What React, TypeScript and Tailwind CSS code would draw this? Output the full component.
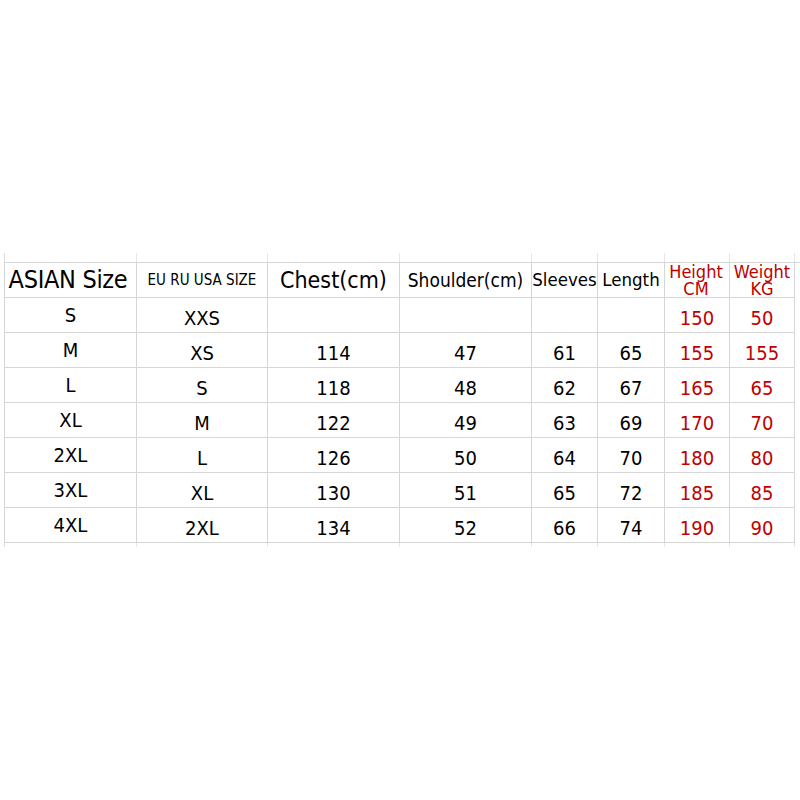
import React from "react";

const cols = "grid-cols-[132px_131px_132px_132px_66px_67px_65px_65px]";

const rows: string[][] = [
  ["S", "XXS", "", "", "", "", "150", "50"],
  ["M", "XS", "114", "47", "61", "65", "155", "155"],
  ["L", "S", "118", "48", "62", "67", "165", "65"],
  ["XL", "M", "122", "49", "63", "69", "170", "70"],
  ["2XL", "L", "126", "50", "64", "70", "180", "80"],
  ["3XL", "XL", "130", "51", "65", "72", "185", "85"],
  ["4XL", "2XL", "134", "52", "66", "74", "190", "90"],
];

export default function App() {
  const font = { fontFamily: '"DejaVu Sans Condensed", "DejaVu Sans", Tahoma, sans-serif' };
  return (
    <div className="w-[800px] h-[800px] bg-white relative overflow-hidden" style={font}>
      <div className="pt-[253px] pl-[4px]">
        {/* stubs above grid */}
        <div className={`grid ${cols} h-[9px] border-l border-[#dcdcdc]`}>
          {Array.from({ length: 8 }).map((_, i) => (
            <div key={i} className="border-r border-[#e6e6e6]" />
          ))}
        </div>
        <div className={`grid ${cols} border-l border-t border-[#d6d6d6]`}>
          {/* header */}
          <div className="h-[35px] border-r border-b border-[#d6d6d6] flex items-center justify-center pr-[5px] text-[25px] text-black tracking-[-0.3px] whitespace-nowrap">
            ASIAN Size
          </div>
          <div className="h-[35px] border-r border-b border-[#d6d6d6] flex items-center justify-center text-[15px] text-black whitespace-nowrap">
            EU RU USA SIZE
          </div>
          <div className="h-[35px] border-r border-b border-[#d6d6d6] flex items-center justify-center pt-[1px] text-[23px] text-black whitespace-nowrap">
            Chest(cm)
          </div>
          <div className="h-[35px] border-r border-b border-[#d6d6d6] flex items-center justify-center text-[19px] text-black whitespace-nowrap">
            Shoulder(cm)
          </div>
          <div className="h-[35px] border-r border-b border-[#d6d6d6] flex items-center justify-center text-[18.5px] text-black whitespace-nowrap">
            Sleeves
          </div>
          <div className="h-[35px] border-r border-b border-[#d6d6d6] flex items-center justify-center text-[18.5px] text-black whitespace-nowrap">
            Length
          </div>
          <div className="h-[35px] border-r border-b border-[#d6d6d6] flex flex-col items-center justify-center text-[18px] text-[#c00000] pr-[2px]">
            <div className="h-[17px] leading-[17px]">Height</div>
            <div className="h-[17px] leading-[17px]">CM</div>
          </div>
          <div className="h-[35px] border-r border-b border-[#d6d6d6] flex flex-col items-center justify-center text-[18px] text-[#c00000]">
            <div className="h-[17px] leading-[17px]">Weight</div>
            <div className="h-[17px] leading-[17px]">KG</div>
          </div>
          {rows.map((r, ri) =>
            r.map((c, ci) => (
              <div
                key={`${ri}-${ci}`}
                className={
                  ci === 0
                    ? "h-[35px] border-r border-b border-[#d6d6d6] flex items-center justify-center pb-[1px] text-[20px] text-black"
                    : ci >= 6
                    ? "h-[35px] border-r border-b border-[#d6d6d6] flex items-center justify-center pt-[6px] text-[20px] text-[#c00000]"
                    : "h-[35px] border-r border-b border-[#d6d6d6] flex items-center justify-center pt-[6px] text-[20px] text-black"
                }
              >
                {c}
              </div>
            ))
          )}
        </div>
        <div className={`grid ${cols} h-[4px] border-l border-[#dcdcdc]`}>
          {Array.from({ length: 8 }).map((_, i) => (
            <div key={i} className="border-r border-[#e6e6e6]" />
          ))}
        </div>
      </div>
    </div>
  );
}
